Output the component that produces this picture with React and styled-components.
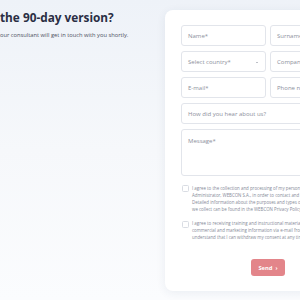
import React from 'react'
import styled, { createGlobalStyle } from 'styled-components'

const GlobalStyle = createGlobalStyle`
  html, body {
    margin: 0;
    padding: 0;
    overflow: hidden;
  }
  body {
    font-family: "Open Sans", "Noto Sans", sans-serif;
  }
`

const Page = styled.div`
  display: flex;
  align-items: flex-start;
  width: 300px;
  height: 300px;
  overflow: hidden;
  background: linear-gradient(180deg, #eef2f8 0%, #f6f8fb 50%, #fbfcfe 100%);
`

const Intro = styled.div`
  flex: none;
  width: 165px;
  padding-top: 9px;
  h1 {
    margin: 0;
    font-size: 11.8px;
    line-height: 16px;
    font-weight: 700;
    color: #2a2e44;
    white-space: nowrap;
  }
  p {
    margin: 7px 0 0 0;
    font-size: 5.75px;
    line-height: 7px;
    color: #4c5061;
    white-space: nowrap;
  }
`

const Card = styled.div`
  flex: none;
  box-sizing: border-box;
  width: 206px;
  margin-top: 10px;
  padding: 15px 16px 15px 16px;
  background: #ffffff;
  border-radius: 8px;
  box-shadow: 0 2px 10px rgba(40, 60, 100, 0.08);
  display: flex;
  flex-direction: column;
`

const Grid = styled.div`
  display: grid;
  grid-template-columns: 1fr 1fr;
  gap: 5px 4px;
`

const Field = styled.div`
  position: relative;
  box-sizing: border-box;
  height: ${p => (p.tall ? '47px' : '21px')};
  grid-column: ${p => (p.wide ? '1 / 3' : 'auto')};
  border: 1px solid #e2e5eb;
  border-radius: 3px;
  display: flex;
  align-items: ${p => (p.tall ? 'flex-start' : 'center')};
  padding: ${p => (p.tall ? '7px 6px' : '0 6px')};
  font-size: 6px;
  color: #8c909c;
  white-space: nowrap;
  overflow: hidden;
`

const Caret = styled.span`
  position: absolute;
  right: 7px;
  top: 10px;
  width: 0;
  height: 0;
  border-left: 1.6px solid transparent;
  border-right: 1.6px solid transparent;
  border-top: 1.8px solid #7d8190;
`

const Consent = styled.label`
  display: flex;
  gap: 3px;
  margin-top: ${p => p.gap}px;
`

const Box = styled.span`
  flex: none;
  box-sizing: border-box;
  width: 7px;
  height: 7px;
  border: 1px solid #d9dce3;
  border-radius: 1.5px;
  margin-left: 1px;
`

const ConsentText = styled.div`
  font-size: 4.4px;
  line-height: 7px;
  margin-top: -0.5px;
  color: #858997;
  div {
    white-space: nowrap;
  }
`

const SendButton = styled.button`
  align-self: center;
  margin-top: 18px;
  width: 34px;
  height: 17px;
  border: none;
  border-radius: 3px;
  background: #e3858a;
  color: #ffffff;
  font-family: inherit;
  font-size: 5.8px;
  font-weight: 700;
  padding: 0;
  display: flex;
  align-items: center;
  justify-content: center;
  gap: 3px;
`

export default function App () {
  return (
    <>
      <GlobalStyle />
      <Page>
        <Intro>
          <h1>the 90-day version?</h1>
          <p>our consultant will get in touch with you shortly.</p>
        </Intro>
        <Card>
          <Grid>
            <Field>Name*</Field>
            <Field>Surname*</Field>
            <Field>Select country*<Caret /></Field>
            <Field>Company*</Field>
            <Field>E-mail*</Field>
            <Field>Phone number*</Field>
            <Field wide>How did you hear about us?</Field>
            <Field wide tall>Message*</Field>
          </Grid>
          <Consent gap={9}>
            <Box />
            <ConsentText>
              <div>I agree to the collection and processing of my personal data by the</div>
              <div>Administrator, WEBCON S.A., in order to contact and respond to my inquiry.</div>
              <div>Detailed information about the purposes and types of personal data</div>
              <div>we collect can be found in the WEBCON Privacy Policy.</div>
            </ConsentText>
          </Consent>
          <Consent gap={8}>
            <Box />
            <ConsentText>
              <div>I agree to receiving training and instructional materials as well as</div>
              <div>commercial and marketing information via e-mail from WEBCON. I</div>
              <div>understand that I can withdraw my consent at any time.</div>
            </ConsentText>
          </Consent>
          <SendButton>Send <span>›</span></SendButton>
        </Card>
      </Page>
    </>
  )
}
